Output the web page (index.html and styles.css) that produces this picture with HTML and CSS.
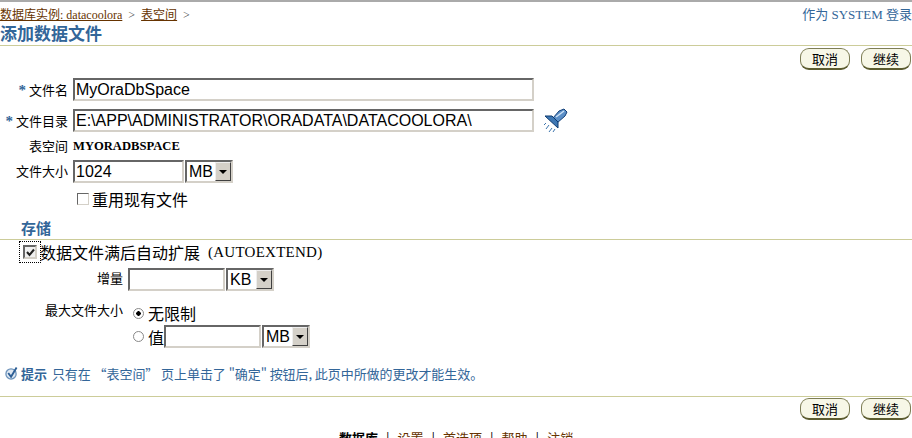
FILE: index.html
```html
<!DOCTYPE html>
<html lang="zh-CN">
<head>
    <meta charset="UTF-8">
    <title>添加数据文件</title>
    <link rel="stylesheet" href="styles.css">
</head>
<body>
    <div class="topbar">
        <div class="crumbs">
            <a href="#">数据库实例: datacoolora</a><span class="sep">&gt;</span><a href="#">表空间</a><span class="sep">&gt;</span>
        </div>
        <div class="login">作为 SYSTEM 登录</div>
    </div>
    <h1>添加数据文件</h1>
    <div class="actions">
        <button class="btn">取消</button>
        <button class="btn">继续</button>
    </div>

    <div class="form">
        <div class="row row-name">
            <label><span class="star">*</span>文件名</label>
            <div class="field wide">MyOraDbSpace</div>
        </div>
        <div class="row row-dir">
            <label><span class="star">*</span>文件目录</label>
            <div class="field wide">E:\APP\ADMINISTRATOR\ORADATA\DATACOOLORA\</div>
            <svg class="torch" width="25" height="25" viewBox="0 0 25 25">
                <path d="M16 3 L21 1 L24 4 L22 8 L14 15 L10 10 Z" fill="#5b8fc7" stroke="#123f78"/>
                <path d="M13 9 L21 3" stroke="#cfe3f5" stroke-width="1.5" fill="none"/>
                <path d="M2 8 L9 8 L15 14 L15 20 Z" fill="#3e77b3" stroke="#0d3a70"/>
                <path d="M3 15 L1 17 M6 17 L3 21 M9 20 L6 24 M12 21 L10 24" stroke="#3c74ac" fill="none"/>
            </svg>
        </div>
        <div class="row row-ts">
            <label>表空间</label>
            <span class="value">MYORADBSPACE</span>
        </div>
        <div class="row row-size">
            <label>文件大小</label>
            <div class="field medium">1024</div>
            <div class="select"><span>MB</span><i class="arrow"></i></div>
        </div>
        <div class="row row-reuse">
            <span class="check"></span><span class="big">重用现有文件</span>
        </div>
    </div>

    <h2>存储</h2>
    <div class="auto">
        <span class="focus"><span class="check checked"><svg width="9" height="9" viewBox="0 0 9 9"><path d="M1 4 L3.5 7 L8 1.5" fill="none" stroke="#222" stroke-width="2"/></svg></span></span>
        <span class="big">数据文件满后自动扩展</span><span class="latin">(AUTOEXTEND)</span>
    </div>
    <div class="row row-inc">
        <label>增量</label>
        <div class="field small"></div>
        <div class="select"><span>KB</span><i class="arrow"></i></div>
    </div>
    <div class="row row-max">
        <label>最大文件大小</label>
        <div class="radios">
            <div class="radio-line"><span class="radio on"></span><span class="big">无限制</span></div>
            <div class="radio-line"><span class="radio"></span><span class="big">值</span><div class="field small"></div><div class="select"><span>MB</span><i class="arrow"></i></div></div>
        </div>
    </div>

    <div class="tip">
        <svg width="13" height="16" viewBox="0 0 14 16">
            <circle cx="6.5" cy="9" r="5.5" fill="#dfe8f2" stroke="#6d93bb" stroke-width="1.4"/>
            <path d="M3.5 8 L6.5 12 L12.5 2" fill="none" stroke="#2d5f96" stroke-width="2"/>
        </svg>
        <b>提示</b>
        <span>只有在 “表空间” 页上单击了 "确定" 按钮后, 此页中所做的更改才能生效。</span>
    </div>

    <div class="actions bottom">
        <button class="btn">取消</button>
        <button class="btn">继续</button>
    </div>

    <div class="footer">
        <b>数据库</b><span class="pipe">|</span><a href="#">设置</a><span class="pipe">|</span><a href="#">首选项</a><span class="pipe">|</span><a href="#">帮助</a><span class="pipe">|</span><a href="#">注销</a>
    </div>
</body>
</html>
```

FILE: styles.css
```css
html, body {
    height: 438px;
    overflow: hidden;
}
body {
    margin: 0;
    box-sizing: border-box;
    background: #fff;
    color: #000;
    font-family: "Liberation Serif", "Noto Sans CJK SC", serif;
    font-size: 12px;
    border-top: 2px solid #aaa;
}
a {
    color: #663300;
}
.topbar {
    display: flex;
    justify-content: space-between;
    height: 22px;
    padding-top: 5px;
    box-sizing: border-box;
    line-height: 16px;
}
.crumbs {
    color: #444;
}
.sep {
    margin: 0 6px;
}
.login {
    color: #336699;
    font-size: 13px;
}
h1 {
    margin: 0;
    height: 21px;
    line-height: 21px;
    font-size: 17px;
    font-weight: bold;
    color: #336699;
    border-bottom: 1px solid #cccc99;
}
.actions {
    display: flex;
    justify-content: flex-end;
    gap: 11px;
    padding: 2px 1px 0 0;
    height: 22px;
}
.btn {
    width: 50px;
    height: 22px;
    padding: 0;
    border: 1px solid #7d7d55;
    border-bottom: 2px solid #5c5c30;
    border-radius: 9px;
    background: #f7f7e7;
    font-family: "Noto Sans CJK SC", sans-serif;
    font-size: 13px;
    line-height: 16px;
    color: #000;
}
.form {
    padding-top: 8px;
}
.row {
    display: flex;
    align-items: center;
}
.row label {
    display: block;
    text-align: right;
    flex: none;
    font-size: 13px;
}
.form label {
    width: 68px;
    margin-right: 5px;
}
.star {
    color: #336699;
    font-weight: bold;
    font-size: 15px;
    line-height: 12px;
    margin-right: 3px;
}
.row-name {
    height: 23px;
}
.row-dir {
    height: 23px;
    margin-top: 8px;
}
.row-ts {
    height: 16px;
    margin-top: 6px;
}
.row-ts label {
    padding-bottom: 2px;
}
.value {
    font-weight: bold;
    font-size: 12.6px;
    padding-top: 1px;
}
.row-size {
    height: 23px;
    margin-top: 6px;
}
.row-size label {
    padding-bottom: 3px;
}
.row-reuse {
    padding-left: 77px;
    height: 20px;
    margin-top: 6px;
}
.field {
    box-sizing: border-box;
    height: 23px;
    border: 2px solid;
    border-color: #666 #d4d0c8 #d4d0c8 #666;
    font-family: "Liberation Sans", sans-serif;
    font-size: 16px;
    line-height: 20px;
    padding-left: 1px;
    white-space: nowrap;
    overflow: hidden;
}
.wide {
    width: 461px;
}
.medium {
    width: 111px;
}
.small {
    width: 97px;
}
.select {
    box-sizing: border-box;
    display: flex;
    align-items: center;
    justify-content: space-between;
    margin-left: 1px;
    width: 48px;
    height: 23px;
    border: 2px solid;
    border-color: #666 #d4d0c8 #d4d0c8 #666;
    font-family: "Liberation Sans", sans-serif;
    font-size: 16px;
    padding-left: 2px;
}
.arrow {
    box-sizing: border-box;
    display: flex;
    align-items: center;
    justify-content: center;
    width: 16px;
    height: 19px;
    background: #d4d0c8;
    border: 1px solid;
    border-color: #eee #404040 #404040 #eee;
}
.arrow::after {
    content: "";
    border: 4px solid transparent;
    border-top-color: #000;
    border-bottom: 0;
}
.torch {
    margin-left: 9px;
}
.check {
    box-sizing: border-box;
    display: inline-flex;
    align-items: center;
    justify-content: center;
    flex: none;
    width: 12px;
    height: 12px;
    border: 1px solid;
    border-color: #666 #d4d0c8 #d4d0c8 #666;
    background: #fff;
    margin-right: 3px;
}
.checked {
    width: 14px;
    height: 14px;
    border-width: 2px;
    background: #f0f0f0;
}
.big {
    font-family: "Noto Sans CJK SC", sans-serif;
    font-size: 16px;
    line-height: 20px;
}
h2 {
    margin: 11px 0 0;
    height: 19px;
    line-height: 18px;
    padding-left: 21px;
    font-size: 15px;
    font-weight: bold;
    color: #336699;
    border-bottom: 1px solid #cccc99;
}
.auto {
    display: flex;
    align-items: center;
    height: 22px;
    margin-top: 1px;
    padding-left: 19px;
}
.focus {
    display: inline-flex;
    align-items: center;
    justify-content: center;
    box-sizing: border-box;
    flex: none;
    width: 22px;
    height: 22px;
    border: 1px dotted #000;
    margin-right: -1px;
}
.focus .check {
    margin: 0;
}
.latin {
    font-size: 15px;
    letter-spacing: 0.25px;
    margin-left: 8px;
}
.row-inc {
    margin-top: 5px;
    height: 23px;
}
.row-inc label {
    width: 123px;
    margin-right: 5px;
    padding-bottom: 4px;
}
.row-max {
    align-items: flex-start;
    margin-top: 13px;
}
.row-max label {
    width: 123px;
    margin-right: 10px;
    line-height: 14px;
}
.radio-line {
    display: flex;
    align-items: center;
    height: 23px;
}
.radio-line:first-child {
    box-sizing: border-box;
    height: 21px;
    padding-bottom: 3px;
}
.radio {
    box-sizing: border-box;
    flex: none;
    width: 11px;
    height: 11px;
    margin-right: 4px;
    border: 1px solid #888;
    border-radius: 50%;
    background: #fff;
}
.radio.on {
    background: radial-gradient(circle, #000 0 2px, #fff 2.5px);
}
.tip {
    display: flex;
    align-items: center;
    gap: 3px;
    margin: 16px 0 0 5px;
    height: 18px;
    color: #336699;
    font-family: "Noto Sans CJK SC", sans-serif;
    font-size: 13px;
    letter-spacing: -0.06px;
    white-space: nowrap;
}
.tip b {
    margin-right: 2px;
}
.bottom {
    margin-top: 14px;
    padding-top: 1px;
    border-top: 1px solid #cccc99;
}
.footer {
    margin-top: 10px;
    padding-left: 339px;
    font-family: "Noto Sans CJK SC", sans-serif;
    font-size: 13px;
    line-height: 16px;
}
.pipe {
    margin: 0 8px;
}
```
